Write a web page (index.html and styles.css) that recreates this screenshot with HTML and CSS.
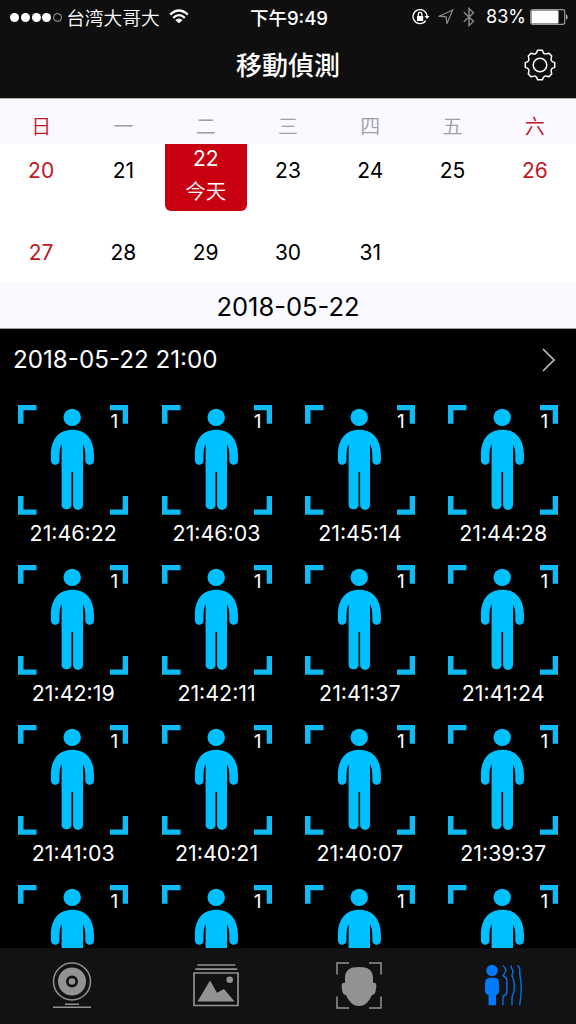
FILE: index.html
```html
<!DOCTYPE html>
<html lang="zh-Hant">

<head>
    <meta charset="UTF-8">
    <meta name="viewport" content="width=device-width, initial-scale=1.0">
    <title>移動偵測</title>
    <link rel="stylesheet" href="styles.css">
</head>

<body>
    <svg class="defs">
        <symbol id="person" viewBox="0 0 110 110">
            <path class="corner" d="M0 0h18.500v5.300h-13v13.500h-5.500zM92 0h18v18.800h-5.300v-13.500h-12.700zM0 91h5.500v13.500h13v5.300h-18.500zM104.700 91h5.300v18.800h-18v-5.300h12.700z" />
            <circle cx="54.200" cy="12.400" r="8.700" />
            <path d="M54.300 24.700C67 24.700 75.900 33 75.900 50V55.500A4.300 4.300 0 0 1 67.300 55.500V49Q67 43 65 39V100A4.900 4.900 0 0 1 55.100 100V67H53.500V100A5 5 0 0 1 43.600 100V39Q41.700 43 41.500 49V55.500A4.300 4.300 0 0 1 32.900 55.500V50C32.900 33 41.600 24.700 54.300 24.700Z" />
        </symbol>
    </svg>
    <div class="app">
        <div class="status">
            <div class="carrier">
                <div class="dots"><i></i><i></i><i></i><i></i><i class="empty"></i></div>
                <span class="operator" lang="zh-Hans">台湾大哥大</span>
                <svg class="wifi" width="20" height="16" viewBox="0 0 20 16" fill="none" stroke="#fff" stroke-width="2.200">
                    <path d="M1.200 5.600Q10-2.600 18.800 5.600M4.200 8.900Q10 3.400 15.800 8.900" />
                    <path d="M10 14.300L6.300 10.900Q10 7.900 13.700 10.900Z" fill="#fff" stroke="none" />
                </svg>
            </div>
            <div class="clock">下午9:49</div>
            <div class="indicators">
                <svg class="lock" width="18" height="16" viewBox="0 0 18 16" fill="none" stroke="#fff" stroke-width="1.300">
                    <path d="M13.700 11.700A7 7 0 1 1 15 7.800" />
                    <path d="M12.500 7h5l-2.500 3z" fill="#fff" stroke="none" />
                    <path d="M5 7h6.200v5h-6.200z" fill="#fff" stroke="none" />
                    <path d="M6.300 7V5.200a1.800 1.800 0 0 1 3.600 0V7" />
                </svg>
                <svg class="arrow" width="16" height="16" viewBox="0 0 16 16" fill="none" stroke="#8b8b8b" stroke-width="1.200">
                    <path d="M14.700 1L1.300 7.200L8.200 7.800L8.900 14.700Z" />
                </svg>
                <svg class="bluetooth" width="12" height="20" viewBox="0 0 12 20" fill="none" stroke="#858585" stroke-width="1.500">
                    <path d="M.8 5.200L10.500 14.300L6 18.500V1.500L10.500 5.700L.8 14.800" />
                </svg>
                <span class="percent">83%</span>
                <svg class="battery" width="38" height="16" viewBox="0 0 38 16">
                    <rect x=".7" y=".7" width="34" height="14.600" rx="2" fill="none" stroke="#999" stroke-width="1.200" />
                    <rect x="1.500" y="1.500" width="27" height="13" rx="1" fill="#fff" />
                    <path d="M36 5.300q1.600.5 1.600 2.700t-1.600 2.700z" fill="#bbb" />
                </svg>
            </div>
        </div>

        <div class="nav">
            <h1>移動偵測</h1>
            <svg class="gear" width="32" height="32" viewBox="0 0 32 32" fill="none" stroke="#fff" stroke-width="1.500" stroke-linejoin="round">
                <path d="M13.500 1.300H18.500Q19 4.200 20.200 4.700T25 4.300L27.700 7Q26.700 10.200 27.300 11.500T30.700 13.600V18.400Q27.800 19.200 27.300 20.500T27.700 25L25 27.700Q21.700 26.700 20.500 27.300T18.400 30.700H13.600Q12.800 27.800 11.500 27.300T7 27.700L4.300 25Q5.300 21.800 4.700 20.500T1.300 18.400V13.600Q4.200 12.800 4.700 11.500T4.300 7L7 4.300Q10.200 5.300 11.500 4.700T13.500 1.300Z" />
                <circle cx="16" cy="16" r="6.800" />
            </svg>
        </div>

        <div class="weekdays">
            <span class="red">日</span>
            <span>一</span>
            <span>二</span>
            <span>三</span>
            <span>四</span>
            <span>五</span>
            <span class="red">六</span>
        </div>
        <div class="days">
            <span class="red">20</span>
            <span>21</span>
            <span class="today"><b>22</b><b>今天</b></span>
            <span>23</span>
            <span>24</span>
            <span>25</span>
            <span class="red">26</span>
            <span class="red">27</span>
            <span>28</span>
            <span>29</span>
            <span>30</span>
            <span>31</span>
        </div>
        <div class="current">2018-05-22</div>

        <div class="hour">
            <span>2018-05-22 21:00</span>
            <svg width="14" height="24" viewBox="0 0 14 24" fill="none" stroke="#bbb" stroke-width="1.700">
                <path d="M1 1L12 12L1 23" />
            </svg>
        </div>
        <ul class="records">
            <li><div class="thumb"><svg><use href="#person" /></svg><em>1</em></div><p>21:46:22</p></li>
            <li><div class="thumb"><svg><use href="#person" /></svg><em>1</em></div><p>21:46:03</p></li>
            <li><div class="thumb"><svg><use href="#person" /></svg><em>1</em></div><p>21:45:14</p></li>
            <li><div class="thumb"><svg><use href="#person" /></svg><em>1</em></div><p>21:44:28</p></li>
            <li><div class="thumb"><svg><use href="#person" /></svg><em>1</em></div><p>21:42:19</p></li>
            <li><div class="thumb"><svg><use href="#person" /></svg><em>1</em></div><p>21:42:11</p></li>
            <li><div class="thumb"><svg><use href="#person" /></svg><em>1</em></div><p>21:41:37</p></li>
            <li><div class="thumb"><svg><use href="#person" /></svg><em>1</em></div><p>21:41:24</p></li>
            <li><div class="thumb"><svg><use href="#person" /></svg><em>1</em></div><p>21:41:03</p></li>
            <li><div class="thumb"><svg><use href="#person" /></svg><em>1</em></div><p>21:40:21</p></li>
            <li><div class="thumb"><svg><use href="#person" /></svg><em>1</em></div><p>21:40:07</p></li>
            <li><div class="thumb"><svg><use href="#person" /></svg><em>1</em></div><p>21:39:37</p></li>
            <li><div class="thumb"><svg><use href="#person" /></svg><em>1</em></div></li>
            <li><div class="thumb"><svg><use href="#person" /></svg><em>1</em></div></li>
            <li><div class="thumb"><svg><use href="#person" /></svg><em>1</em></div></li>
            <li><div class="thumb"><svg><use href="#person" /></svg><em>1</em></div></li>
        </ul>

        <div class="tabs">
            <a href="#">
                <svg width="48" height="48" viewBox="0 0 48 48" fill="none" stroke="#929292">
                    <circle cx="24" cy="20.500" r="18.500" stroke-width="1.500" />
                    <circle cx="24" cy="20.500" r="10" stroke-width="8" />
                    <circle cx="24" cy="20.500" r="3.300" fill="#929292" stroke="none" />
                    <path d="M17 43.200h14M5 46.300h38" stroke-width="1.500" />
                </svg>
            </a>
            <a href="#">
                <svg width="48" height="48" viewBox="0 0 48 48" fill="none" stroke="#929292" stroke-width="1.700">
                    <path d="M5.300 4h38M3.300 8.200h42" />
                    <path d="M2 12h44v32.500h-44z" />
                    <path d="M5.500 40.500L18 19.500L25 31.800L32 28L42.500 40.500Z" fill="#929292" stroke="none" />
                    <circle cx="37.700" cy="18.800" r="3.300" fill="#929292" stroke="none" />
                </svg>
            </a>
            <a href="#">
                <svg width="48" height="48" viewBox="0 0 48 48" fill="none" stroke="#929292" stroke-width="1.500">
                    <path d="M2 13.500v-11.500h12M34 2h12v11.500M46 35.500v11.500h-12M14 47h-12v-11.500" />
                    <path d="M10 22V17C10 9 15 6 24 6S38 9 38 17V22C42.500 21 41.500 26 40.500 31Q39.500 34 37 34C33.500 42 29 45 24 45S14.500 42 11 34Q8.500 34 7.500 31C6.500 26 5.500 21 10 22Z" fill="#929292" stroke="none" />
                </svg>
            </a>
            <a href="#">
                <svg width="48" height="48" viewBox="0 0 48 48" fill="none" stroke="#006edf" stroke-width="1.500">
                    <circle cx="13" cy="9.500" r="5.700" fill="#007aff" stroke="none" />
                    <path d="M12 16.700h3Q20 16.700 20 22V30Q20 33 17 34V44.300h-7.500V34Q6 33 6 30V22Q6 16.700 12 16.700Z" fill="#007aff" stroke="none" />
                    <path d="M23.700 4.500Q27 7 26.800 9.500T24 14.500Q27.500 16.500 27.800 19V32Q27.500 34 24 35V44.300M32.300 4.500V7C35 9 34 12 33 14.500C36.500 22 36.500 28 33 36.500V44.300M38.500 4.500C40.800 6 40.800 8 40.800 13C43 24 43 32 40.600 44.300" />
                </svg>
            </a>
        </div>
    </div>
</body>

</html>
```
FILE: styles.css
```css
* {
    margin: 0;
    padding: 0;
    box-sizing: border-box;
    list-style: none;
}

body {
    background-color: #000;
    font-family: Inter, "Noto Sans CJK TC", sans-serif;
    color: #fff;
}

.defs {
    display: none;
}

.app {
    display: flex;
    flex-direction: column;
    width: 576px;
    height: 1024px;
    overflow: hidden;
}

.app svg {
    display: block;
    flex: none;
}

/* status bar */
.status {
    display: grid;
    grid-template-columns: 1fr auto 1fr;
    align-items: center;
    flex: none;
    height: 32px;
    padding: 0 8px 0 10px;
    background-color: #0f0f0f;
    font-size: 18px;
    line-height: 32px;
}

.carrier,
.indicators,
.dots {
    display: flex;
    align-items: center;
}

.dots {
    gap: 1.800px;
}

.dots i {
    width: 9px;
    height: 9px;
    border-radius: 50%;
    background-color: #fff;
}

.dots .empty {
    border: 1px solid #aaa;
    background-color: transparent;
}

.operator {
    margin-left: 4px;
    font-family: "Noto Sans CJK SC", sans-serif;
    font-size: 18.700px;
    font-weight: 350;
}

.wifi {
    margin-left: 9px;
}

.clock {
    padding-top: 2px;
    font-size: 18.500px;
    font-weight: 500;
}

.indicators {
    justify-content: flex-end;
}

.arrow {
    margin-left: 8px;
}

.bluetooth {
    margin-left: 9px;
}

.percent {
    margin: 0 4px 0 11px;
}

/* title */
.nav {
    display: grid;
    grid-template-columns: 1fr auto 1fr;
    align-items: center;
    flex: none;
    height: 67px;
    padding-right: 20px;
    padding-left: 20px;
    border-bottom: 1px solid #aaa;
    background-color: #0f0f0f;
}

.nav h1 {
    grid-column: 2;
    padding-top: 2px;
    font-size: 26px;
    font-weight: 500;
    line-height: 40px;
}

.gear {
    justify-self: end;
}

/* calendar */
.weekdays,
.days {
    display: grid;
    grid-template-columns: repeat(7, 1fr);
    flex: none;
    text-align: center;
}

.weekdays {
    height: 45px;
    padding-top: 13px;
    background-color: #f9f9ff;
    color: #a0a0a3;
    font-size: 20px;
    font-weight: 350;
    line-height: 30px;
}

.days {
    grid-template-rows: 67px 71px;
    height: 138px;
    background-color: #fff;
    color: #000;
    font-size: 21px;
    line-height: 54px;
}

.days > span:nth-child(n+8) {
    padding-top: 15px;
}

.weekdays .red,
.days .red {
    color: #c31525;
}

.days .today {
    border-radius: 0 0 6px 6px;
    background-color: #c90010;
    color: #fff;
}

.today b {
    display: block;
    font-size: 20.500px;
    font-weight: 350;
    line-height: 35px;
}

.today b:first-child {
    font-size: 21px;
    font-weight: 400;
    line-height: 30px;
}

.current {
    flex: none;
    height: 47px;
    border-bottom: 1px solid #999;
    background-color: #f9f9ff;
    color: #000;
    font-size: 25.500px;
    line-height: 49px;
    text-align: center;
}

/* records */
.hour {
    display: flex;
    align-items: center;
    justify-content: space-between;
    flex: none;
    height: 61px;
    padding: 0 20px 0 13px;
    font-size: 24.200px;
}

.records {
    display: grid;
    grid-template-columns: repeat(4, 1fr);
    grid-auto-rows: 160px;
    flex: 1;
    min-height: 0;
    padding: 15px 1.200px 0 1.600px;
    overflow: hidden;
}

.thumb {
    position: relative;
    width: 110px;
    height: 110px;
    margin: 0 auto;
}

.thumb svg {
    width: 110px;
    height: 110px;
    fill: #00c0ff;
}

.corner {
    fill: #10baf5;
}

.thumb em {
    position: absolute;
    top: 5px;
    right: 10px;
    font-size: 19px;
    font-style: normal;
    line-height: 24px;
}

.records p {
    font-size: 21.400px;
    line-height: 37px;
    text-align: center;
}

/* tab bar */
.tabs {
    display: grid;
    grid-template-columns: repeat(4, 1fr);
    flex: none;
    height: 76px;
    padding: 13px 1px 0 0;
    background-color: #121212;
}

.tabs a {
    display: flex;
    justify-content: center;
}
```
